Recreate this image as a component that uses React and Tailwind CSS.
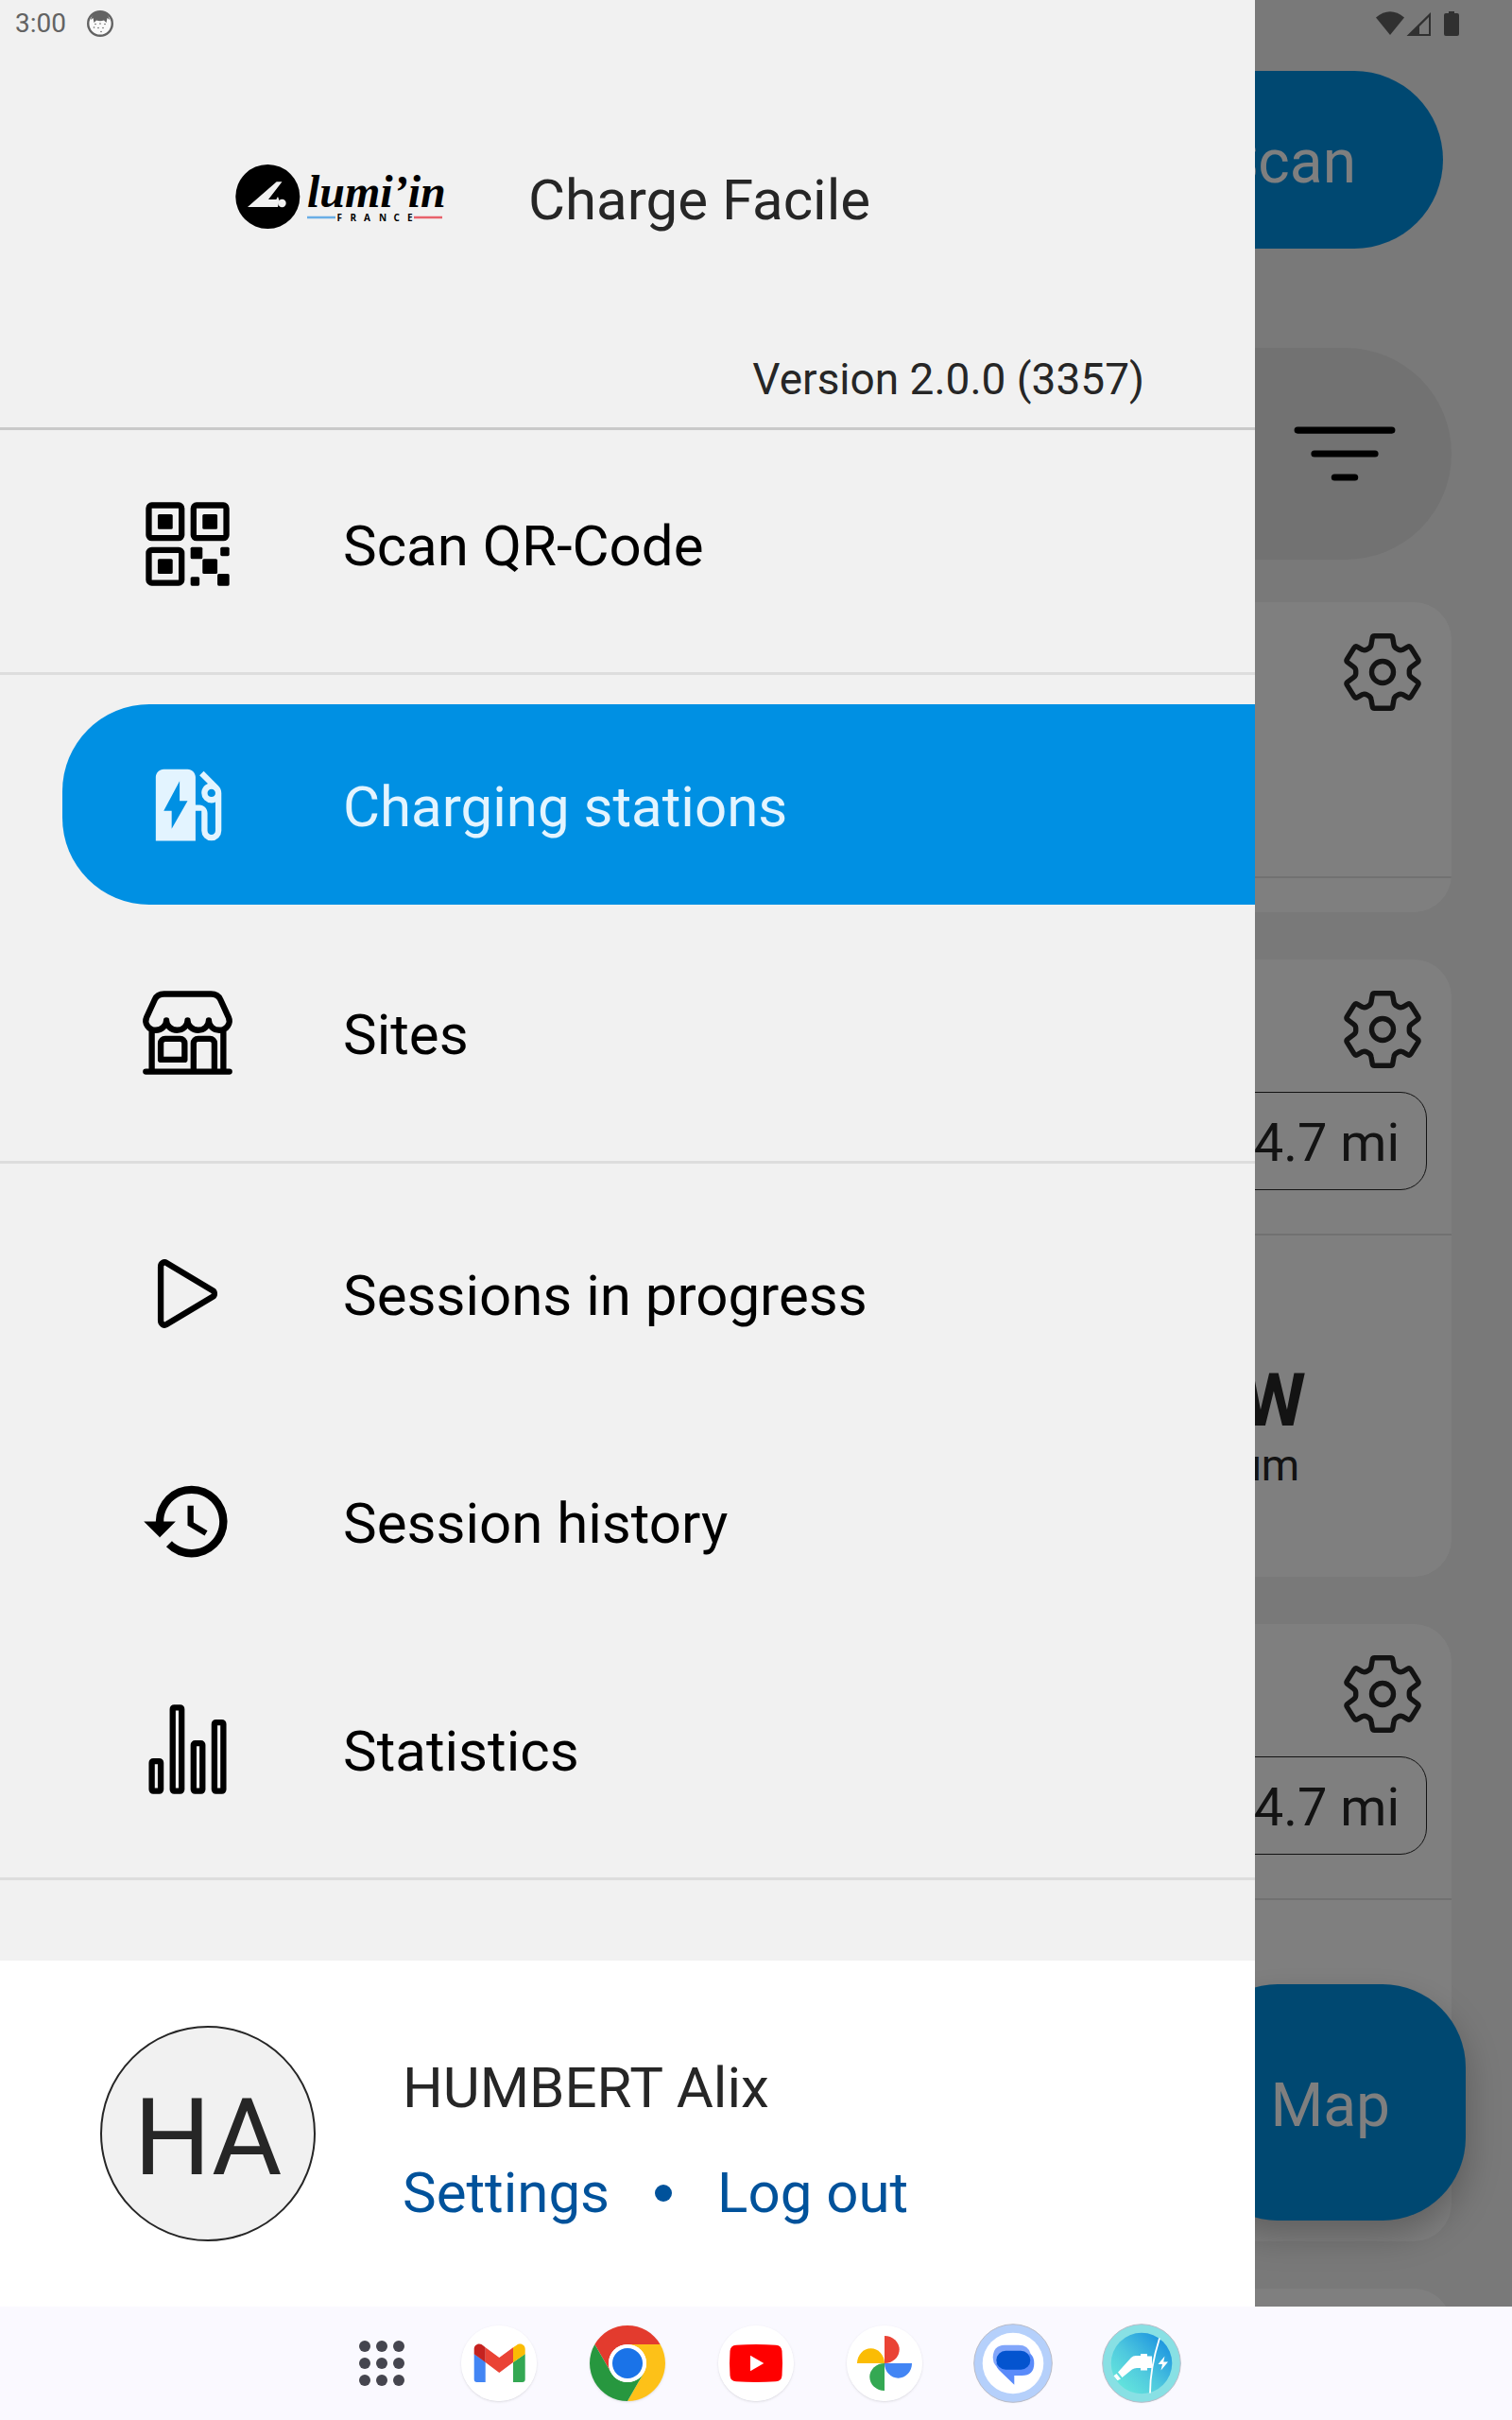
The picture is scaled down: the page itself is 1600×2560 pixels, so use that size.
import React, { useState } from "react";
import {
  IoFilterOutline,
  IoPlayOutline,
  IoQrCodeOutline,
  IoStatsChartOutline,
  IoStorefrontOutline,
} from "react-icons/io5";
import { MdEvStation, MdHistory } from "react-icons/md";

const menuGroups = [
  [{ id: "scan", label: "Scan QR-Code", icon: IoQrCodeOutline }],
  [
    { id: "stations", label: "Charging stations", icon: MdEvStation },
    { id: "sites", label: "Sites", icon: IoStorefrontOutline },
  ],
  [
    { id: "sessions", label: "Sessions in progress", icon: IoPlayOutline },
    { id: "history", label: "Session history", icon: MdHistory },
    { id: "stats", label: "Statistics", icon: IoStatsChartOutline },
  ],
];

const stations = [
  { id: 1, distance: null, power: null },
  { id: 2, distance: "4.7 mi", power: "22 kW" },
  { id: 3, distance: "4.7 mi", power: "22 kW" },
  { id: 4, distance: null, power: null },
];

function GearIcon() {
  return (
    <svg viewBox="-41 -41 82 82" className="size-[82px]" fill="none" stroke="currentColor" strokeWidth="5.4" strokeLinejoin="round" aria-hidden="true">
      <path d="M-8.500-38.300H8.500Q10.400-38.300 10.700-36.500L12-29Q12.400-26.300 14.900-25L16.300-24.100Q18.700-22.700 21.300-23.700L26.500-26.700Q28.700-27.900 30-25.900L37.600-13.600Q38.700-11.700 37-10.300L30.700-5.600Q28.300-3.800 28.300-1.500V1.500Q28.300 3.800 30.700 5.600L37 10.300Q38.700 11.700 37.600 13.600L30 25.900Q28.700 27.900 26.500 26.700L21.300 23.700Q18.700 22.700 16.300 24.100L14.900 25Q12.400 26.300 12 29L10.700 36.500Q10.400 38.300 8.500 38.300H-8.500Q-10.400 38.300-10.700 36.500L-12 29Q-12.400 26.300-14.900 25L-16.300 24.100Q-18.700 22.700-21.300 23.700L-26.500 26.700Q-28.700 27.900-30 25.900L-37.600 13.600Q-38.700 11.700-37 10.300L-30.700 5.600Q-28.300 3.800-28.300 1.500V-1.500Q-28.300-3.800-30.700-5.600L-37-10.300Q-38.700-11.700-37.600-13.600L-30-25.900Q-28.700-27.900-26.500-26.700L-21.300-23.700Q-18.700-22.700-16.300-24.100L-14.900-25Q-12.400-26.300-12-29L-10.700-36.500Q-10.400-38.300-8.500-38.300Z" />
      <circle r="11.500" />
    </svg>
  );
}

function Logo() {
  return (
    <svg viewBox="0 0 225 70" className="h-[70px] w-[225px] shrink-0" role="img" aria-label="lumi'in France">
      <circle cx="34.300" cy="35" r="34" fill="#000" />
      <path d="M13 46 43.700 19.300h5.800L35 38h8.300l1.700-3 1.500 4-1.500 7z" fill="#f1f1f1" />
      <circle cx="49.500" cy="42" r="4.200" fill="#f1f1f1" />
      <text x="76" y="46" fontFamily="Liberation Serif, serif" fontWeight="700" fontStyle="italic" fontSize="48">
        lumi’in
      </text>
      <path d="M76 57h30" stroke="#6aaee6" strokeWidth="2.500" />
      <path d="M189 57h30" stroke="#e8616b" strokeWidth="2.500" />
      <text x="107.500 121.500 136 152 167.500 182" y="61" fontFamily="Open Sans, sans-serif" fontWeight="700" fontSize="10">
        FRANCE
      </text>
    </svg>
  );
}

function FaceIcon() {
  return (
    <svg viewBox="0 0 28 28" className="size-7" aria-hidden="true">
      <circle cx="14" cy="14" r="12.800" fill="#fafafa" stroke="#636363" strokeWidth="2.400" />
      <path d="M4 10C5 4 9 1.500 14 1.500S23 4 24 10l-2.500-2L20.500 13 18 10.500q-4 1.500-8 0L7.500 13 6.500 8z" fill="#636363" />
      <g fill="#636363">
        <circle cx="9" cy="14.500" r=".8" />
        <circle cx="14" cy="14" r=".8" />
        <circle cx="19" cy="14.500" r=".8" />
        <circle cx="7.500" cy="18" r=".8" />
        <circle cx="12" cy="18.500" r=".8" />
        <circle cx="17" cy="18.500" r=".8" />
        <circle cx="15" cy="22.500" r=".8" />
      </g>
    </svg>
  );
}

function SystemIcons() {
  return (
    <svg viewBox="0 0 88 26" className="h-[26px] w-[88px]" fill="#606060" aria-hidden="true">
      <path d="M0 6.500Q15-6 30 6.500L15 25z" />
      <path fillRule="evenodd" d="M32.500 26 58 1v25zM46 24h10V6L46 16z" />
      <path d="M77 0h6v2h3q2 0 2 2v20q0 2-2 2H74q-2 0-2-2V4q0-2 2-2h3z" />
    </svg>
  );
}

function GmailIcon() {
  return (
    <svg viewBox="0 0 80 80" className="size-20" aria-hidden="true">
      <circle cx="40" cy="40" r="40" fill="#fff" />
      <path d="M13.700 30l12 8.500V60h-9q-3 0-3-3z" fill="#4285f4" />
      <path d="M67.700 30 55 39v21h9.700q3 0 3-3z" fill="#34a853" />
      <path d="M25.700 23.300l14.600 10.600L55 23.300V39L40.300 50 25.700 39z" fill="#ea4335" />
      <path d="M13.700 25c0-4.800 5.200-7.300 9.200-4.100l2.800 2.400V39l-12-8.700z" fill="#c5221f" />
      <path d="M67.700 25c0-4.800-5.200-7.300-9.200-4.100L55 23.300V39l12.700-8.700z" fill="#fbbc04" />
    </svg>
  );
}

function ChromeIcon() {
  return (
    <svg viewBox="0 0 80 80" className="size-20" aria-hidden="true">
      <path d="M5.360 20A40 40 0 0 1 74.640 20H40A20 20 0 0 0 22.700 50Z" fill="#e33b2e" />
      <path d="M74.640 20A40 40 0 0 1 40 80L57.300 50A20 20 0 0 0 40 20Z" fill="#fdc118" />
      <path d="M40 80A40 40 0 0 1 5.360 20L22.700 50A20 20 0 0 0 57.300 50Z" fill="#27973f" />
      <circle cx="40" cy="40" r="20" fill="#fff" />
      <circle cx="40" cy="40" r="16" fill="#1a73e8" />
    </svg>
  );
}

function YoutubeIcon() {
  return (
    <svg viewBox="0 0 80 80" className="size-20" aria-hidden="true">
      <circle cx="40" cy="40" r="40" fill="#fff" />
      <path d="M19 20.700q21-1.200 42 0 6 .3 6.500 6.300 1 13 0 26-.5 6-6.500 6.300-21 1.200-42 0-6-.3-6.500-6.300-1-13 0-26 .5-6 6.500-6.300z" fill="#f00" />
      <path d="M34 31.800 48.300 40 34 48.200z" fill="#fff" />
    </svg>
  );
}

function PhotosIcon() {
  return (
    <svg viewBox="0 0 80 80" className="size-20" aria-hidden="true">
      <circle cx="40" cy="40" r="40" fill="#fff" />
      <path d="M40 11a15.700 14.500 0 0 1 0 29z" fill="#ea4335" />
      <path d="M40 40h29a14.500 15.700 0 0 1-29 0z" fill="#4285f4" />
      <path d="M40 40v29a15.700 14.500 0 0 1 0-29z" fill="#34a853" />
      <path d="M40 40H11a14.500 15.700 0 0 1 29 0z" fill="#fbbc04" />
    </svg>
  );
}

function MessagesIcon() {
  return (
    <svg viewBox="0 0 84 84" className="size-[84px]" aria-hidden="true">
      <circle cx="42" cy="42" r="41.300" fill="#b5d0fb" stroke="#b9bcc8" strokeWidth="1" />
      <circle cx="42" cy="42" r="32.300" fill="#fff" />
      <path d="M33 22.700h15q10 0 12.500 9L58 49H31q-10-3-10.300-13Q21 23 33 22.700z" fill="#82a6fa" />
      <path d="M60.300 32q4 3 4 10 0 13-13 13H43.300v9.700L27 49q-3-3-3-7z" fill="#5a8bfa" />
      <rect x="24.300" y="28.700" width="36" height="20" rx="10" fill="#0454cf" />
    </svg>
  );
}

function ChargeIcon() {
  return (
    <svg viewBox="0 0 84 84" className="size-[84px]" aria-hidden="true">
      <defs>
        <linearGradient id="chargeFill" x1="0" y1="1" x2="1" y2="0">
          <stop offset="0" stopColor="#6cefdc" />
          <stop offset=".45" stopColor="#4fc9de" />
          <stop offset="1" stopColor="#0f86e0" />
        </linearGradient>
      </defs>
      <circle cx="42" cy="42" r="41.300" fill="#88e0e4" stroke="#b9bcc8" strokeWidth="1" />
      <circle cx="42" cy="42" r="32.300" fill="url(#chargeFill)" />
      <path d="M61 15.500Q51 47 51 73.500" stroke="#fff" strokeWidth="1.800" fill="none" />
      <path d="M17 51.500 31 36q2-2 5-2h5v-2h7v2.500h5V47h-5v2.500h-7V47h-4q-3 0-5 1.500L21.500 57zM15.500 53l4.500 5.500-3.500 1.800-4-5z" fill="#fff" />
      <path d="M66.500 34.500 59.500 43h4.500l-1.500 6.500 7.500-9h-4.800z" fill="#fff" />
    </svg>
  );
}

const dockApps = [
  { name: "Gmail", icon: GmailIcon },
  { name: "Chrome", icon: ChromeIcon },
  { name: "YouTube", icon: YoutubeIcon },
  { name: "Photos", icon: PhotosIcon },
  { name: "Messages", icon: MessagesIcon },
  { name: "Charge Facile", icon: ChargeIcon },
];

function StationCard({ station }) {
  return (
    <article className="shrink-0 overflow-hidden rounded-[40px] bg-white">
      <div className="flex h-[292px] flex-col items-end gap-[25px] border-b-2 border-[#e2e2e2] px-[26px] pt-[33px]">
        <button type="button" aria-label="Station settings" className="mr-1.5">
          <GearIcon />
        </button>
        {station.distance && (
          <span className="flex h-[104px] items-center rounded-[28px] border border-[#262626] px-7 pt-1 text-[56px]">
            {station.distance}
          </span>
        )}
      </div>
      {station.power ? (
        <div className="flex h-[361px] items-center justify-end pt-12 pr-[154px]">
          <div className="text-center">
            <p className="text-[78px] leading-[72px] font-bold">{station.power}</p>
            <p className="pt-1 text-[46px] leading-[56px]">Maximum</p>
          </div>
        </div>
      ) : (
        <div className="h-9" />
      )}
    </article>
  );
}

function Stations() {
  return (
    <main className="flex h-full flex-col overflow-hidden bg-[#f2f2f2] px-16 text-[#262626]">
      <div className="-mr-2 flex h-[50px] shrink-0 items-center justify-end">
        <SystemIcons />
      </div>
      <div className="mt-[25px] flex shrink-0 justify-end pr-[9px]">
        <button type="button" className="h-[188px] rounded-full bg-[#0090e3] px-[92px] pt-1.5 text-[64px] text-white">
          Scan
        </button>
      </div>
      <div className="mt-[105px] flex h-[224px] shrink-0 items-center justify-end rounded-full bg-[#e4e4e4] pr-14">
        <button type="button" aria-label="Filter" className="text-black">
          <IoFilterOutline className="size-[114px]" />
        </button>
      </div>
      <div className="mt-[45px] flex flex-col gap-[50px]">
        {stations.map((station) => (
          <StationCard key={station.id} station={station} />
        ))}
      </div>
      <button
        type="button"
        className="absolute right-[49px] bottom-[91px] h-[250px] rounded-[88px] bg-[#0090e3] px-20 pt-2 text-[64px] text-white shadow-[0_16px_36px_rgba(0,0,0,0.25)]"
      >
        Map
      </button>
    </main>
  );
}

function Drawer({ active, onSelect }) {
  return (
    <aside className="absolute inset-y-0 left-0 flex w-[83%] flex-col bg-[#f1f1f1]">
      <div className="flex h-[50px] shrink-0 items-center gap-[22px] px-4 text-[28px] text-[#636363]">
        <span>3:00</span>
        <FaceIcon />
      </div>

      <header className="flex flex-col gap-[115px] border-b-3 border-[#c9c9c9] pt-[110px] pb-[21px] text-[#262626]">
        <div className="flex h-24 items-center gap-[85px] pl-[249px]">
          <Logo />
          <h1 className="pt-2 text-[60px]">Charge Facile</h1>
        </div>
        <p className="pr-[117px] text-right text-[46px] leading-[60px]">Version 2.0.0 (3357)</p>
      </header>

      <nav className="flex flex-col pt-[14px]">
        {menuGroups.map((group, index) => (
          <div key={index} className="mb-[31px] flex flex-col gap-[29px] border-b-3 border-[#dddddd] pb-[30px]">
            {group.map((item) => {
              const Icon = item.icon;
              return (
                <button
                  key={item.id}
                  type="button"
                  onClick={() => onSelect(item.id)}
                  className={`ml-[66px] flex h-[212px] items-center gap-[114px] rounded-l-[92px] pl-[82px] text-[60px] ${
                    item.id === active ? "bg-[#0090e3] text-[#e3f4ff]" : "text-black"
                  }`}
                >
                  <Icon className="size-[101px] shrink-0" />
                  <span className="pt-1.5">{item.label}</span>
                </button>
              );
            })}
          </div>
        ))}
      </nav>

      <footer className="mt-auto flex h-[366px] shrink-0 items-center gap-[92px] bg-white px-[106px] text-[60px] text-[#262626]">
        <div className="flex size-[228px] shrink-0 items-center justify-center rounded-full border-2 border-[#262626] bg-[#f1f1f1] pt-2 text-[114px]">
          HA
        </div>
        <div className="flex flex-col gap-[39px] pt-[14px] leading-[72px]">
          <p>HUMBERT Alix</p>
          <div className="flex items-center gap-12 text-[#00529b]">
            <a href="#settings">Settings</a>
            <span className="size-[18px] rounded-full bg-[#00529b]" />
            <a href="#logout">Log out</a>
          </div>
        </div>
      </footer>
    </aside>
  );
}

function Dock() {
  return (
    <div className="flex h-[120px] shrink-0 items-center justify-center gap-14 bg-[#faf9ff] pl-6">
      <button type="button" aria-label="All apps" className="grid w-14 grid-cols-3 justify-items-center gap-y-1.5 px-px">
        {[...Array(9)].map((_, i) => (
          <span key={i} className="size-3 rounded-full bg-[#45454f]" />
        ))}
      </button>
      {dockApps.map(({ name, icon: Icon }) => (
        <button key={name} type="button" aria-label={name} className="flex size-20 items-center justify-center rounded-full shadow-sm">
          <span className="shrink-0">
            <Icon />
          </span>
        </button>
      ))}
    </div>
  );
}

export default function App() {
  const [active, setActive] = useState("stations");

  return (
    <div className="flex h-screen flex-col font-[Roboto,sans-serif]">
      <div className="relative min-h-0 flex-1 overflow-hidden">
        <Stations />
        <div className="absolute inset-0 bg-black/50" />
        <Drawer active={active} onSelect={setActive} />
      </div>
      <Dock />
    </div>
  );
}
